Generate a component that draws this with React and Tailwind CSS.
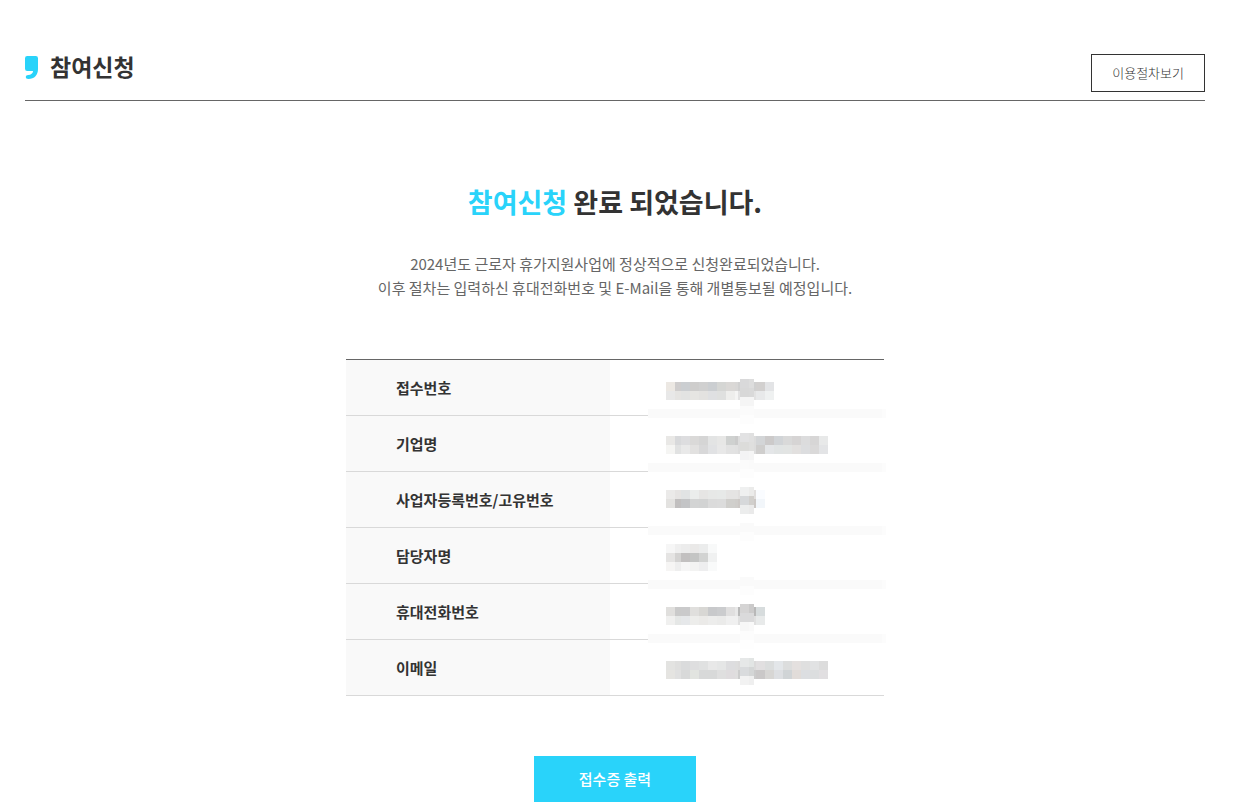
const rows = [
  "접수번호",
  "기업명",
  "사업자등록번호/고유번호",
  "담당자명",
  "휴대전화번호",
  "이메일",
];

// Left edges of the mosaic cells; the last entry closes the final cell.
const edges = [18, 27, 33, 42, 51, 60, 69, 78, 87, 90, 108, 117, 126, 135, 144, 153, 162, 171, 180];

const bands = [
  { y: 23, colors: ["ece8e3", "cfcdcd", "cbced1", "cecdcc", "d0d0d0", "cbced1", "d5d6d4", "dad8d6", "d8d7d6", "d0d0d0", "d2d0cf", "e3e4e6"] },
  { y: 32, colors: ["e8e8e8", "e5e4e2", "e2e3e2", "e6e5e2", "e3e2e0", "dfe0e2", "dfe0df", "eeeeec", "f5f5f4", "e2e2e2", "e8e9ea", "eff1f1"] },
  { y: 77, colors: ["e9e8e6", "d8d9db", "dddddf", "dad9d8", "d5d5d5", "e3e4e4", "e7e7e6", "cfd1d0", "cbcbcb", "dcdcdc", "d3d5d7", "cccaca", "d1d4d7", "d9d9d9", "d6d4d4", "dcdcdd", "d7d6d6", "e8e9e9"] },
  { y: 86, colors: ["f5f5f3", "e1e2e2", "e9e9e9", "e2e1e0", "d8d8d9", "e1e2e4", "e8e8e8", "e2e2e2", "e1e1e1", "dcdcdc", "cfcecd", "e4e6e8", "e1e4e4", "e2e4e3", "e2e0df", "dcdddf", "dad9d9", "e3e4e6"] },
  { y: 131, colors: ["ebeae9", "e6e4e3", "e1e3e4", "ebedec", "e6e5e4", "e7e8e7", "e7e9e8", "e5e4e3", "e5e4e3", "e1dfde", "fafcff"] },
  { y: 140, colors: ["e3e2e0", "c1bfbf", "c3c4c6", "d3d4d4", "d2d3d3", "dbdbdb", "dcdcdc", "d0cfcc", "cfcdca", "ccc8c5", "f2f6fa"] },
  { y: 185, colors: ["f6f6f6", "efefef", "ececec", "eae9e8", "ebecec", "f8f9f9"] },
  { y: 194, colors: ["e5e4e3", "d4d3d2", "c2c0c0", "c4c5c4", "d2d3d2", "f0f1f1"] },
  { y: 203, colors: ["f6f5f4", "eeeeee", "f6f6f6", "f3f3f2", "eeeeef", "f9fafa"] },
  { y: 248, colors: ["e0dfdd", "cacaca", "cacacb", "e0dfdd", "d8d7d4", "c8c9cb", "cbccce", "e0dfdf", "e8e8e8", "b8b8b8", "d7dcdd"] },
  { y: 257, colors: ["f0f0ef", "e5e7e6", "e6e8ea", "ededeb", "ebeae8", "ededec", "ebebea", "f0f0f0", "f0f0f0", "e0e0e0", "e8eaea"] },
  { y: 302, colors: ["e3e3e1", "dfdfde", "dadbdc", "dededf", "e0e1e1", "e8e8e8", "e5e6e6", "dddddf", "dddddd", "dbdada", "e1dfe0", "dbdddd", "e3e6e9", "dcdddd", "e4e0df", "dfdfdf", "e1e2e3", "dcdcdc"] },
  { y: 311, colors: ["e5e4e1", "e0e0e0", "d8d9d9", "e2e4e0", "d8d9d9", "d8d9d9", "dfdfdf", "dfdcde", "dfdede", "cccccc", "cac8c8", "d7d6d4", "dddfe2", "d0d4d6", "e1dcd9", "dcdee1", "dcdedf", "e1dfe1"] },
];

// Raised cells over the middle of the mosaic: top, left colour, right colour.
const middle = [
  [20, "d9d9da", "dddddd"], [29, "d8d8d8", "d9d9d9"], [38, "f5f5f5", "f5f5f5"], [47, "fbfbfb", "fbfbfb"], [56, "fdfdfd", "fdfdfd"],
  [74, "e2e2e3", "e0e0e0"], [83, "dcdcda", "dfdfde"], [92, "f3f3f4", "f5f5f5"], [101, "fbfbfb", "fafafa"], [110, "fdfdfd", "fdfdfd"],
  [128, "eff0f0", "ebebea"], [137, "d6d8da", "d1cfcc"], [146, "eceded", "eaeaea"], [164, "fafafa", "fafafa"], [173, "fdfdfd", "fdfdfd"],
  [218, "fafafa", "fafafa"], [227, "fdfdfd", "fdfdfd"],
  [245, "d5d4d4", "cbcaca"], [254, "dadadb", "dadadb"], [263, "f7f7f7", "f9f9f9"], [272, "fcfcfc", "fcfcfc"], [281, "fefefe", "fefefe"],
  [299, "e6e8e8", "e2e5e4"], [308, "d9dbdd", "d4d6d6"], [317, "f2f2f2", "efefef"],
];

const strips = [50, 104, 167, 221, 275];

function Mosaic() {
  return (
    <svg
      className="pointer-events-none absolute top-0 -right-0.5"
      width="238"
      height="337"
      viewBox="0 0 238 337"
      shapeRendering="crispEdges"
      aria-hidden="true"
    >
      {strips.map((y) => (
        <g key={y}>
          <rect x="0" y={y} width="234" height="9" fill="#fafafa" />
          <rect x="234" y={y} width="4" height="9" fill="#fcfcfc" />
        </g>
      ))}
      {bands.map(({ y, colors }) =>
        colors.map((color, i) => (
          <rect key={`${y}-${i}`} x={edges[i]} y={y} width={edges[i + 1] - edges[i]} height="9" fill={`#${color}`} />
        ))
      )}
      {middle.map(([y, left, right]) => (
        <g key={y}>
          <rect x="92" y={y} width="9" height="9" fill={`#${left}`} />
          <rect x="101" y={y} width="5" height="9" fill={`#${right}`} />
        </g>
      ))}
    </svg>
  );
}

export default function App() {
  return (
    <div className="min-h-screen bg-white pt-[54px] pr-[33px] pb-[5px] pl-[25px] font-['Noto_Sans_CJK_KR','Noto_Sans',sans-serif] text-[#333]">
      <header className="flex items-start justify-between border-b border-[#666] pb-2">
        <div className="flex items-start gap-3">
          <svg className="mt-0.5" width="13" height="23" viewBox="0 0 13 23" aria-hidden="true">
            <path
              fill="#29d3fa"
              d="M2.2 0H10.8Q13 0 13 2.2V13C13 19 9.5 23 3.4 23C1.6 23 .8 22.2 .8 21C.8 19.7 1.7 19.1 3.2 19C6.1 18.8 7.8 17.5 8.1 15H2.2Q0 15 0 12.8V2.2Q0 0 2.2 0Z"
            />
          </svg>
          <h1 className="text-[23px] leading-6 font-bold">참여신청</h1>
        </div>
        <button type="button" className="h-[38px] border border-[#333] bg-white px-5 text-[13px] leading-5 font-light">
          이용절차보기
        </button>
      </header>

      <main className="flex flex-col items-center">
        <h2 className="mt-[83px] text-center text-[27px] leading-9 font-bold">
          <span className="text-[#29d3fa]">참여신청</span> 완료 되었습니다.
        </h2>
        <p className="mt-8 text-center text-[15px] leading-6 text-[#666]">
          2024년도 근로자 휴가지원사업에 정상적으로 신청완료되었습니다.
          <br />
          이후 절차는 입력하신 휴대전화번호 및 E-Mail을 통해 개별통보될 예정입니다.
        </p>

        <div className="relative mt-[59px] w-full max-w-[538px]">
          <table className="w-full table-fixed border-separate border-spacing-0 border-t border-[#666] text-left text-[15px] leading-6">
            <tbody>
              {rows.map((label) => (
                <tr key={label}>
                  <th scope="row" className="h-14 w-[49%] border-b border-[#d9d9d9] bg-[#f9f9f9] pl-[50px] font-bold">
                    {label}
                  </th>
                  <td className="border-b border-[#d9d9d9]" />
                </tr>
              ))}
            </tbody>
          </table>
          <Mosaic />
        </div>

        <button type="button" className="mt-[60px] h-[46px] w-[162px] bg-[#29d3fa] text-[15px] leading-6 font-medium text-white">
          접수증 출력
        </button>
      </main>
    </div>
  );
}
